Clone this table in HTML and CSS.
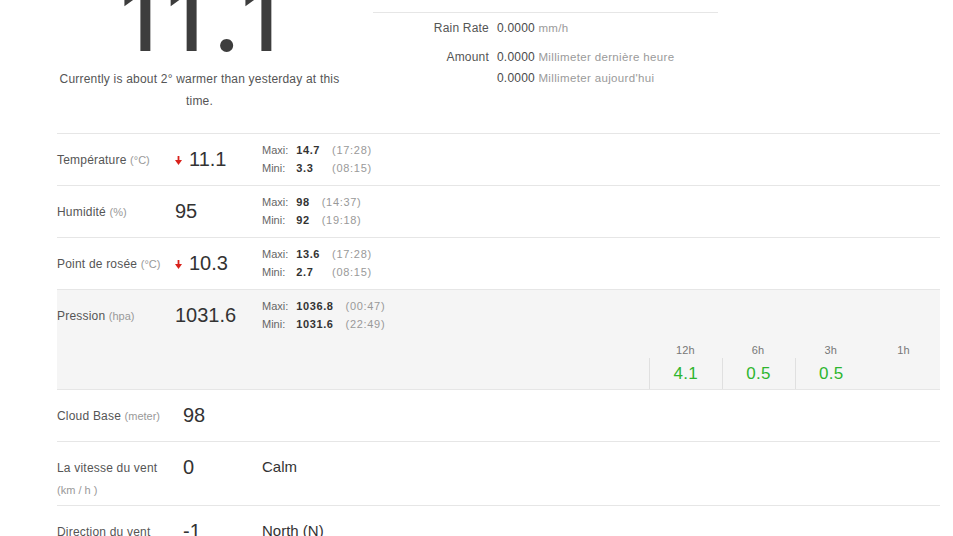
FILE: index.html
```html
<!DOCTYPE html>
<html lang="fr">
<head>
<meta charset="utf-8">
<title>Météo</title>
<link rel="stylesheet" href="styles.css">
</head>
<body>
<div class="page">
  <section class="top">
    <div class="now">
      <div class="big">11.1</div>
      <p class="compare">Currently is about 2° warmer than yesterday at this time.</p>
    </div>
    <div class="rain">
      <hr class="sep">
      <div class="kv">
        <span class="k">Rain Rate</span>
        <span class="v">0.0000 <small>mm/h</small></span>
      </div>
      <div class="kv amount">
        <span class="k">Amount</span>
        <span class="v">0.0000 <small>Millimeter dernière heure</small><br>0.0000 <small>Millimeter aujourd'hui</small></span>
      </div>
    </div>
  </section>

  <section class="obs">
    <div class="row">
      <div class="lbl">Température <small>(°C)</small></div>
      <div class="val"><svg class="down" viewBox="0 0 7 9" width="7" height="9"><path d="M2.6 0h1.8v4.5H2.6z"/><path d="M0 4h7L3.5 9z"/></svg>11.1</div>
      <div class="mm"><span>Maxi:</span><b>14.7</b><i>(17:28)</i><span>Mini:</span><b>3.3</b><i>(08:15)</i></div>
    </div>
    <div class="row">
      <div class="lbl">Humidité <small>(%)</small></div>
      <div class="val">95</div>
      <div class="mm"><span>Maxi:</span><b>98</b><i>(14:37)</i><span>Mini:</span><b>92</b><i>(19:18)</i></div>
    </div>
    <div class="row">
      <div class="lbl">Point de rosée <small>(°C)</small></div>
      <div class="val"><svg class="down" viewBox="0 0 7 9" width="7" height="9"><path d="M2.6 0h1.8v4.5H2.6z"/><path d="M0 4h7L3.5 9z"/></svg>10.3</div>
      <div class="mm"><span>Maxi:</span><b>13.6</b><i>(17:28)</i><span>Mini:</span><b>2.7</b><i>(08:15)</i></div>
    </div>
    <div class="group">
      <div class="row">
        <div class="lbl">Pression <small>(hpa)</small></div>
        <div class="val">1031.6</div>
        <div class="mm"><span>Maxi:</span><b>1036.8</b><i>(00:47)</i><span>Mini:</span><b>1031.6</b><i>(22:49)</i></div>
      </div>
      <div class="trend">
        <div class="tcol"><span class="th">12h</span><span class="tv">4.1</span></div>
        <div class="tcol"><span class="th">6h</span><span class="tv">0.5</span></div>
        <div class="tcol"><span class="th">3h</span><span class="tv">0.5</span></div>
        <div class="tcol"><span class="th">1h</span><span class="tv empty"></span></div>
      </div>
    </div>
    <div class="row wide">
      <div class="lbl">Cloud Base <small>(meter)</small></div>
      <div class="val">98</div>
      <div class="desc"></div>
    </div>
    <div class="row wide">
      <div class="lbl">La vitesse du vent <small>(km / h )</small></div>
      <div class="val">0</div>
      <div class="desc">Calm</div>
    </div>
    <div class="row wide">
      <div class="lbl">Direction du vent</div>
      <div class="val">-1</div>
      <div class="desc">North (N)</div>
    </div>
  </section>
</div>
</body>
</html>
```

FILE: styles.css
```css
* { box-sizing: border-box; }

html, body {
  margin: 0;
  padding: 0;
  background: #ffffff;
}

body {
  font-family: "Liberation Sans", Arial, sans-serif;
  font-size: 12px;
  color: #555555;
  letter-spacing: 0.2px;
}

.page {
  width: 883px;
  margin: -25px 0 0 57px;
  padding-bottom: 40px;
}

/* ---------- top area ---------- */
.top {
  display: flex;
  align-items: flex-start;
}

.now {
  width: 285px;
  text-align: center;
}

.big {
  font-family: Inter, "Liberation Sans", sans-serif;
  font-weight: 500;
  font-size: 90px;
  line-height: 87px;
  color: #3d3d3d;
  letter-spacing: 9px;
  text-indent: 9px;
}

.compare {
  margin: 6px 0 0;
  font-size: 12px;
  line-height: 22px;
  color: #555555;
}

.rain {
  width: 345px;
  margin-left: 31px;
}

.sep {
  margin: 37px 0 0;
  border: 0;
  border-top: 1px solid #e6e6e6;
  height: 0;
}

.kv {
  display: grid;
  grid-template-columns: 116px 1fr;
  column-gap: 8px;
  line-height: 21px;
  margin-top: 5px;
}

.kv.amount {
  margin-top: 8px;
}

.kv .k {
  text-align: right;
  color: #555555;
}

.kv .v {
  color: #4a4a4a;
}

.kv small {
  font-size: 11.5px;
  color: #9a9a9a;
  letter-spacing: 0.35px;
}

/* ---------- observation table ---------- */
.obs {
  margin-top: 21px;
}

.row {
  display: grid;
  grid-template-columns: 118px 87px 1fr;
  border-top: 1px solid #e6e6e6;
  min-height: 52px;
}

.row.wide {
  grid-template-columns: 126px 79px 1fr;
}

.group {
  border-top: 1px solid #e6e6e6;
  background: #f5f5f5;
}

.group .row {
  border-top: 0;
  min-height: 51px;
}

.lbl {
  padding: 15px 10px 4px 0;
  line-height: 22px;
  color: #555555;
}

.lbl small {
  font-size: 11px;
  color: #999999;
  letter-spacing: 0;
}

.val {
  padding-top: 12px;
  line-height: 26px;
  font-size: 20px;
  color: #333333;
  letter-spacing: 0;
  display: flex;
  align-items: center;
  align-self: start;
}

.down {
  fill: #d9221c;
  margin: 2px 7px 0 0;
  flex: none;
}

.mm {
  display: inline-grid;
  grid-template-columns: auto auto auto;
  column-gap: 8px;
  justify-content: start;
  align-content: start;
  padding-top: 7px;
  font-size: 11px;
  line-height: 18px;
  color: #666666;
  letter-spacing: 0;
}

.mm b {
  color: #333333;
  letter-spacing: 0.6px;
}

.mm i {
  font-style: normal;
  color: #999999;
  padding-left: 4px;
  letter-spacing: 0.7px;
}

.desc {
  padding-top: 13px;
  line-height: 24px;
  font-size: 15px;
  color: #333333;
  letter-spacing: 0;
}

/* ---------- pressure trend ---------- */
.trend {
  display: grid;
  grid-template-columns: repeat(4, 1fr);
  width: 291px;
  margin-left: auto;
}

.tcol {
  display: flex;
  flex-direction: column;
  text-align: center;
}

.th {
  padding-top: 1px;
  line-height: 16px;
  font-size: 11px;
  color: #777777;
}

.tv {
  height: 31px;
  line-height: 31px;
  font-size: 17px;
  color: #2fb52f;
  border-left: 1px solid #e0e0e0;
  letter-spacing: 0.3px;
}

.tv.empty {
  border-left-color: transparent;
}
```
